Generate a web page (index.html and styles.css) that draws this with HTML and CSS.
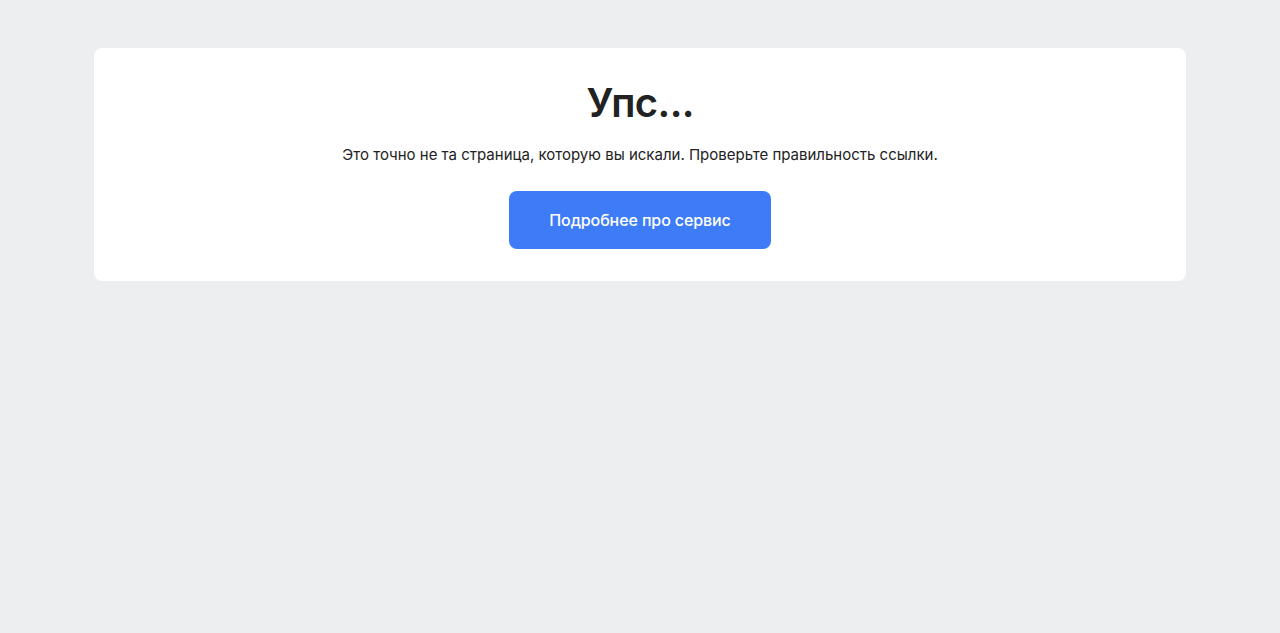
FILE: index.html
```html
<!DOCTYPE html>
<html lang="ru">
<head>
<meta charset="utf-8">
<title>Упс...</title>
<link rel="stylesheet" href="styles.css">
</head>
<body>
<main class="page">
  <section class="card">
    <h1 class="title">Упс...</h1>
    <p class="text">Это точно не та страница, которую вы искали. Проверьте правильность ссылки.</p>
    <a class="button" href="#">Подробнее про сервис</a>
  </section>
</main>
</body>
</html>
```

FILE: styles.css
```css
html, body {
  margin: 0;
  padding: 0;
  background: #edeef0;
  font-family: Inter, "Noto Sans", sans-serif;
  color: #222;
}
.page {
  display: flex;
  justify-content: center;
  padding-top: 48px;
}
.card {
  width: 1092px;
  box-sizing: border-box;
  background: #fff;
  border-radius: 8px;
  padding: 32px 0 32px;
  display: flex;
  flex-direction: column;
  align-items: center;
}
.title {
  margin: 0;
  font-size: 40px;
  line-height: 46px;
  font-weight: 600;
  letter-spacing: -0.6px;
  padding-left: 0.6px;
  color: #222;
}
.text {
  margin: 18px 0 0;
  font-size: 15px;
  line-height: 22px;
  color: #222;
}
.button {
  margin-top: 25px;
  height: 58px;
  padding: 0 40px;
  display: flex;
  align-items: center;
  background: #3d7cf6;
  color: #fff;
  border-radius: 8px;
  font-size: 16px;
  font-weight: 500;
  letter-spacing: -0.1px;
  text-decoration: none;
}
```
